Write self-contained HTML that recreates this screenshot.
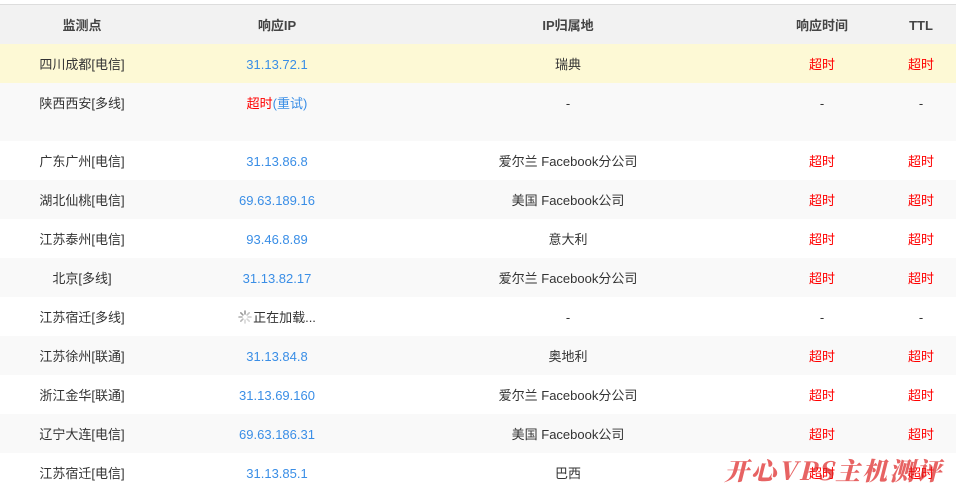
<!DOCTYPE html>
<html><head><meta charset="utf-8"><style>
*{margin:0;padding:0;box-sizing:border-box}
body{width:956px;height:493px;overflow:hidden;background:#fff;font-family:"Liberation Sans","Noto Sans CJK SC",sans-serif;font-size:13px;color:#333;position:relative}
.r{position:absolute;left:0;width:956px}
.c{position:absolute;text-align:center;white-space:nowrap;line-height:16px}
.h .c{font-weight:bold;color:#444}
.b{color:#3a8ee6}.red{color:#f00}
</style></head><body>
<div class="r" style="top:4px;height:1px;background:#ddd"></div>
<div id="rows"></div>
<div style="position:absolute;left:724px;top:452px;font-size:25px;font-style:italic;font-weight:900;color:#d22;letter-spacing:2px;opacity:.7;font-family:'Noto Serif CJK SC','Liberation Serif',serif">开心VPS主机测评</div>
<script>
var cols=[82,277,568,822,921];
var data=[
["监测点","响应IP","IP归属地","响应时间","TTL",5,39,"#f2f2f2",1],
["四川成都[电信]","<span class=b>31.13.72.1</span>","瑞典","<span class=red>超时</span>","<span class=red>超时</span>",44,39,"#fdf9d5"],
["陕西西安[多线]","<span class=red>超时</span><span class=b>(重试)</span>","-","-","-",83,58,"#f9f9f9"],
["广东广州[电信]","<span class=b>31.13.86.8</span>","爱尔兰 Facebook分公司","<span class=red>超时</span>","<span class=red>超时</span>",141,39,"#fff"],
["湖北仙桃[电信]","<span class=b>69.63.189.16</span>","美国 Facebook公司","<span class=red>超时</span>","<span class=red>超时</span>",180,39,"#f9f9f9"],
["江苏泰州[电信]","<span class=b>93.46.8.89</span>","意大利","<span class=red>超时</span>","<span class=red>超时</span>",219,39,"#fff"],
["北京[多线]","<span class=b>31.13.82.17</span>","爱尔兰 Facebook分公司","<span class=red>超时</span>","<span class=red>超时</span>",258,39,"#f9f9f9"],
["江苏宿迁[多线]","<svg width=14 height=14 viewBox='0 0 14 14' style='vertical-align:-2px;margin-right:1px'><g stroke='#999' stroke-width='1.6' stroke-linecap='round'><line x1=7 y1=1 x2=7 y2=4 /><line x1=7 y1=10 x2=7 y2=13 opacity=.4 /><line x1=1 y1=7 x2=4 y2=7 opacity=.8 /><line x1=10 y1=7 x2=13 y2=7 opacity=.5 /><line x1=2.8 y1=2.8 x2=4.9 y2=4.9 /><line x1=9.1 y1=9.1 x2=11.2 y2=11.2 opacity=.4 /><line x1=11.2 y1=2.8 x2=9.1 y2=4.9 opacity=.6 /><line x1=2.8 y1=11.2 x2=4.9 y2=9.1 opacity=.7 /></g></svg>正在加载...","-","-","-",297,39,"#fff"],
["江苏徐州[联通]","<span class=b>31.13.84.8</span>","奥地利","<span class=red>超时</span>","<span class=red>超时</span>",336,39,"#f9f9f9"],
["浙江金华[联通]","<span class=b>31.13.69.160</span>","爱尔兰 Facebook分公司","<span class=red>超时</span>","<span class=red>超时</span>",375,39,"#fff"],
["辽宁大连[电信]","<span class=b>69.63.186.31</span>","美国 Facebook公司","<span class=red>超时</span>","<span class=red>超时</span>",414,39,"#f9f9f9"],
["江苏宿迁[电信]","<span class=b>31.13.85.1</span>","巴西","<span class=red>超时</span>","<span class=red>超时</span>",453,39,"#fff"]
];
var h="";
data.forEach(function(d,i){
 var ty=((i==2)?12:(d[6]-16)/2)+1;
 h+='<div class="r'+(d[8]?' h':'')+'" style="top:'+d[5]+'px;height:'+d[6]+'px;background:'+d[7]+'">';
 for(var j=0;j<5;j++){h+='<div class="c" style="left:'+(cols[j]-150)+'px;width:300px;top:'+ty+'px">'+d[j]+'</div>';}
 h+='</div>';
});
document.getElementById('rows').innerHTML=h;
</script>
</body></html>
